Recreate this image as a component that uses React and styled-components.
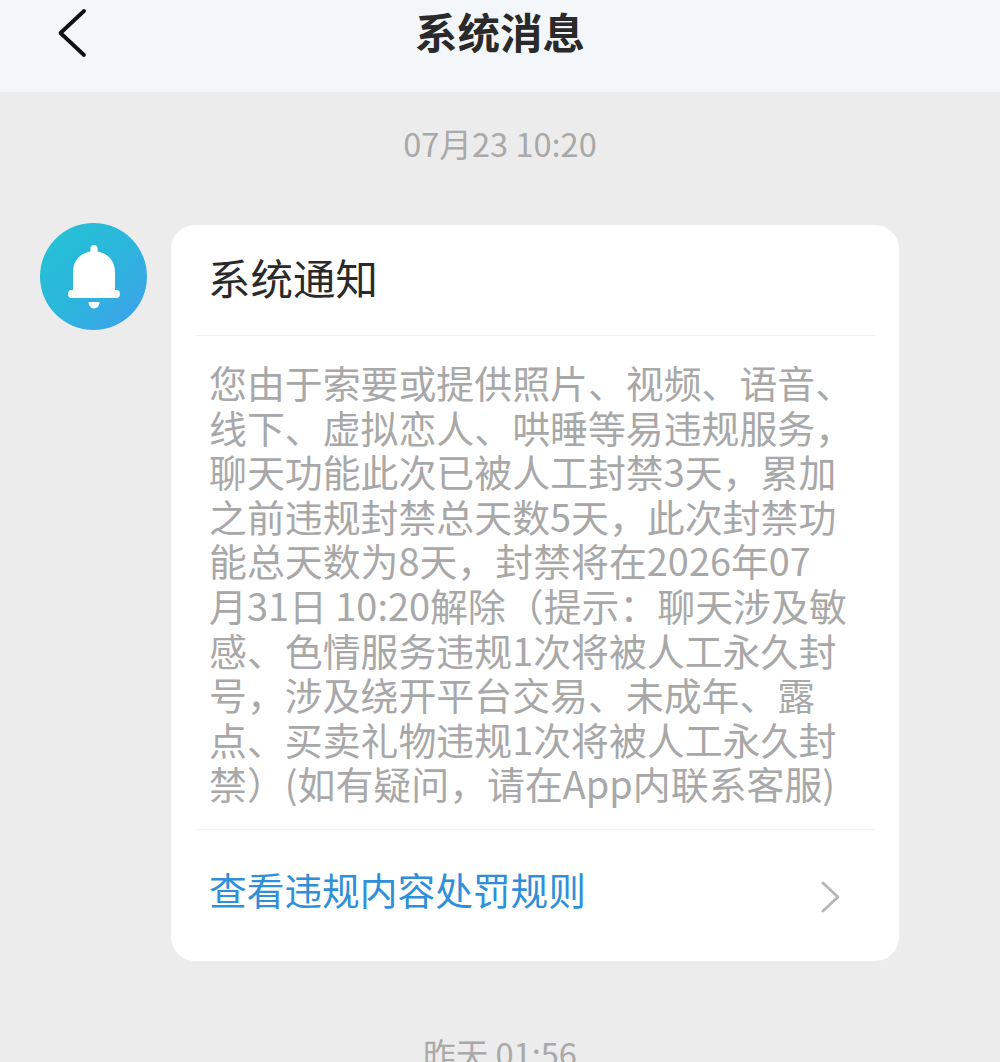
import React from 'react';
import styled, { createGlobalStyle } from 'styled-components';

const GlobalStyle = createGlobalStyle`
  html, body {
    margin: 0;
    padding: 0;
    background: #ececec;
  }
  body {
    font-family: "Noto Sans CJK SC", "Noto Sans", sans-serif;
  }
`;

const Page = styled.div`
  width: 1000px;
  height: 1062px;
  overflow: hidden;
  background: #ececec;
`;

const Header = styled.header`
  height: 92px;
  background: #f4f7fa;
  display: flex;
  align-items: flex-start;
  justify-content: center;
  position: relative;
`;

const BackButton = styled.div`
  position: absolute;
  left: 56px;
  top: 8px;
  width: 32px;
  height: 50px;
`;

const HeaderTitle = styled.h1`
  margin: 3px 0 0;
  font-size: 42.5px;
  line-height: 56px;
  font-weight: 700;
  color: #2a2a2a;
`;

const TimeStamp = styled.div`
  text-align: center;
  font-size: 32.6px;
  line-height: 44px;
  color: #a9a9a9;
  padding-top: ${({ $top }) => $top}px;
`;

const MessageRow = styled.div`
  display: flex;
  align-items: flex-start;
  gap: 24px;
  padding: ${({ $top }) => $top}px 0 0 40px;
`;

const Avatar = styled.div`
  flex: none;
  width: 107px;
  height: 107px;
  margin-top: -2px;
  border-radius: 50%;
  background: linear-gradient(135deg, #22c4d4 0%, #2cb6dc 50%, #3f9fec 100%);
  display: flex;
  align-items: center;
  justify-content: center;
`;

const Card = styled.section`
  width: 728px;
  height: 736px;
  box-sizing: border-box;
  background: #fff;
  border-radius: 24px;
  padding: 0 24px;
  display: flex;
  flex-direction: column;
`;

const CardTitle = styled.div`
  height: 111px;
  box-sizing: border-box;
  padding: 24px 0 0 13px;
  font-size: 42.5px;
  line-height: 56px;
  color: #2a2a2a;
  border-bottom: 1px solid #f3f3f3;
`;

const CardBody = styled.div`
  height: 494px;
  box-sizing: border-box;
  padding: 24px 0 0 14px;
  font-size: 37.9px;
  line-height: 44.6px;
  color: #a8a8a8;
  border-bottom: 1px solid #f3f3f3;
`;

const Line = styled.div`
  white-space: nowrap;
`;

const CardLink = styled.div`
  flex: 1;
  display: flex;
  align-items: flex-start;
  justify-content: space-between;
  padding: 34px 33px 0 14px;
  font-size: 37.7px;
  line-height: 50px;
  color: #2f8fd8;
`;

const Chevron = styled.div`
  width: 22px;
  height: 34px;
  margin-top: 9px;
`;

const lines = [
  '您由于索要或提供照片、视频、语音、',
  '线下、虚拟恋人、哄睡等易违规服务\uFF0C',
  '聊天功能此次已被人工封禁3天\uFF0C累加',
  '之前违规封禁总天数5天\uFF0C此次封禁功',
  '能总天数为8天\uFF0C封禁将在2026年07',
  '月31日 10:20解除\uFF08提示\uFF1A聊天涉及敏',
  '感、色情服务违规1次将被人工永久封',
  '号\uFF0C涉及绕开平台交易、未成年、露',
  '点、买卖礼物违规1次将被人工永久封',
  '禁\uFF09(如有疑问\uFF0C请在App内联系客服)',
];

const BellIcon = () => (
  <svg width="52" height="64" viewBox="0 0 52 64" fill="#fff">
    <path d="M26 0c2 0 3.600 1.600 3.600 3.600v2.800C40 8 47 16.500 47 27v18h2c1.700 0 3 1.700 3 4s-1.300 4-3 4H3c-1.700 0-3-1.700-3-4s1.300-4 3-4h2V27C5 16.500 12 8 22.400 6.400V3.600C22.400 1.600 24 0 26 0z" />
    <path d="M20.500 57h11c0 3.600-2.400 6.500-5.500 6.500s-5.500-2.900-5.500-6.500z" />
  </svg>
);

export default function App() {
  return (
    <Page>
      <GlobalStyle />
      <Header>
        <BackButton>
          <svg width="32" height="50" viewBox="0 0 32 50" fill="none" stroke="#111" strokeWidth="3.800" strokeLinecap="round" strokeLinejoin="round">
            <path d="M28 3 L4.500 25 L28 47" />
          </svg>
        </BackButton>
        <HeaderTitle>系统消息</HeaderTitle>
      </Header>
      <TimeStamp $top={29}>07月23 10:20</TimeStamp>
      <MessageRow $top={60}>
        <Avatar>
          <BellIcon />
        </Avatar>
        <Card>
          <CardTitle>系统通知</CardTitle>
          <CardBody>
            {lines.map((line) => (
              <Line key={line}>{line}</Line>
            ))}
          </CardBody>
          <CardLink>
            查看违规内容处罚规则
            <Chevron>
              <svg width="22" height="34" viewBox="0 0 22 34" fill="none" stroke="#b5b5b5" strokeWidth="2.800" strokeLinecap="round" strokeLinejoin="round">
                <path d="M3 3 L18 17 L3 31" />
              </svg>
            </Chevron>
          </CardLink>
        </Card>
      </MessageRow>
      <TimeStamp $top={70}>昨天 01:56</TimeStamp>
    </Page>
  );
}
